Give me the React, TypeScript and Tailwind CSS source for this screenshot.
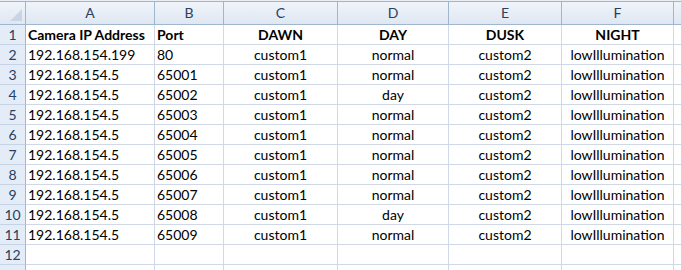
const cols = ['A', 'B', 'C', 'D', 'E', 'F'];

const rows: string[][] = [
  ['Camera IP Address', 'Port', 'DAWN', 'DAY', 'DUSK', 'NIGHT'],
  ['192.168.154.199', '80', 'custom1', 'normal', 'custom2', 'lowIllumination'],
  ['192.168.154.5', '65001', 'custom1', 'normal', 'custom2', 'lowIllumination'],
  ['192.168.154.5', '65002', 'custom1', 'day', 'custom2', 'lowIllumination'],
  ['192.168.154.5', '65003', 'custom1', 'normal', 'custom2', 'lowIllumination'],
  ['192.168.154.5', '65004', 'custom1', 'normal', 'custom2', 'lowIllumination'],
  ['192.168.154.5', '65005', 'custom1', 'normal', 'custom2', 'lowIllumination'],
  ['192.168.154.5', '65006', 'custom1', 'normal', 'custom2', 'lowIllumination'],
  ['192.168.154.5', '65007', 'custom1', 'normal', 'custom2', 'lowIllumination'],
  ['192.168.154.5', '65008', 'custom1', 'day', 'custom2', 'lowIllumination'],
  ['192.168.154.5', '65009', 'custom1', 'normal', 'custom2', 'lowIllumination'],
  ['', '', '', '', '', ''],
  ['', '', '', '', '', ''],
];

const gridCols = 'grid grid-cols-[26px_129px_69px_114px_111px_113px_112px_1fr]';

const App = () => {
  return (
    <div className="w-[681px] h-[270px] overflow-hidden bg-white font-['Lato',sans-serif] text-[14px] text-black">
      <div className="h-px bg-[#e9eef5]" />
      <div className="h-px bg-[#9fb5cf]" />
      <div className={gridCols}>
        <div className="relative h-[23px] border-r border-b border-[#9eb6ce] bg-gradient-to-b from-[#f0f4fa] to-[#dfe7f2]">
          <div className="absolute right-[3px] bottom-[3px] w-0 h-0 border-l-[12px] border-l-transparent border-b-[12px] border-b-[#c9d5e4]" />
        </div>
        {cols.map((c) => (
          <div
            key={c}
            className="h-[23px] flex items-center justify-center border-r border-b border-[#9eb6ce] bg-gradient-to-b from-[#f0f4fa] to-[#dfe7f2] text-[#27415f] text-[14px] leading-none"
          >
            {c}
          </div>
        ))}
        <div className="h-[23px] border-b border-[#9eb6ce] bg-gradient-to-b from-[#f0f4fa] to-[#dfe7f2]" />
      </div>
      {rows.map((r, i) => (
        <div key={i} className={gridCols}>
          <div className="h-5 flex items-center justify-center border-r border-b border-r-[#9eb6ce] border-b-[#c5d3e6] bg-[#e4ecf7] text-[#27415f] leading-none">
            {i < 12 ? i + 1 : ''}
          </div>
          {r.map((v, j) => (
            <div
              key={j}
              className={
                'h-5 flex items-center border-r border-b border-[#d0d7e5] leading-none whitespace-nowrap overflow-hidden ' +
                (j < 2 ? 'justify-start pl-[2px] ' : 'justify-center ') +
                (i === 0 ? 'font-bold' : '')
              }
            >
              {v}
            </div>
          ))}
          <div className="h-5 border-b border-[#d0d7e5]" />
        </div>
      ))}
    </div>
  );
};

export default App;
